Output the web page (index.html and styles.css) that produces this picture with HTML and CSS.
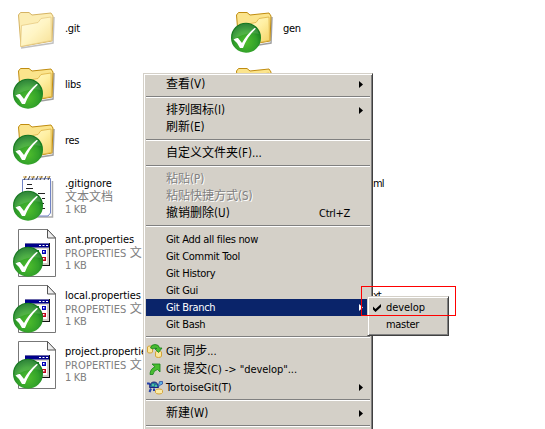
FILE: index.html
```
<!DOCTYPE html>
<html lang="zh-CN">
<head>
<meta charset="utf-8">
<title>Git</title>
<link rel="stylesheet" href="styles.css">
</head>
<body>
<svg class="defs" width="0" height="0">
  <defs>
    <linearGradient id="front" x1="0" y1="0" x2="1" y2="1"><stop offset="0" stop-color="#fffbd8"/><stop offset=".5" stop-color="#fff0a4"/><stop offset="1" stop-color="#f3cf5c"/></linearGradient>
    <radialGradient id="green" cx=".5" cy=".65" r=".6"><stop offset="0" stop-color="#4fbe2c"/><stop offset=".6" stop-color="#32a12a"/><stop offset="1" stop-color="#12751d"/></radialGradient>
    <symbol id="folder" viewBox="8 0 48 56">
      <path d="M21 48 53 43 54 17" fill="none" stroke="#777" stroke-width="1.500" opacity=".7"/>
      <path d="M18.500 15 20.500 12.500H29L32 15 51 13 53 16 52 41 21 46.500Z" fill="#fbe48c" stroke="#c08c10"/>
      <path d="M21.500 25.500 38 22.500 41 18.500 51 17 51.500 40.500 20.500 46.500Z" fill="url(#front)" stroke="#dcb040" stroke-width=".8"/>
    </symbol>
    <symbol id="note" viewBox="8 0 48 56">
      <path d="M24 49H52.500V13" fill="none" stroke="#aaa" stroke-width="1.500"/>
      <path d="M22.500 11.500 50.500 10.500V45L48 48H22.500Z" fill="#fff" stroke="#7183c5"/>
      <path d="M24 12 26 8M28 12 30 8M32 12 34 8M36 12 38 8M40 12 42 8M44 12 46 8M48 12 50 8" stroke="#3c3c3c"/>
      <path d="M23 9H27M31 9H35M39 9H43M47 9H50" stroke="#d9a33b"/>
      <path d="M27 16.500H32M26 20.500H33M38 25.500H45M36 30.500H41M42 30.500H45M37 35.500H44M36 40.500H45" stroke="#222" stroke-width="1.200"/>
    </symbol>
    <symbol id="props" viewBox="8 0 48 56">
      <path d="M18.500 5.500H47.500L55.500 14V52.500H18.500Z" fill="#fff" stroke="#777"/>
      <path d="M47.500 5.500V14H55.500Z" fill="#eee" stroke="#555"/>
      <path d="M25 19H50V42H25Z" fill="#111"/><path d="M25 19H49V41H25Z" fill="#d4d0c8"/><path d="M27 25H47V39H27Z" fill="#fff"/>
      <path d="M25 19.500H49V23.500H25Z" fill="#00008b"/>
      <path d="M39 21H41V22H39ZM42.500 21H44.500V22H42.500ZM46 21H48V22H46Z" fill="#fff"/>
      <path d="M28 26H32V30H28ZM42 26H46V30H42Z" fill="#0000b8"/><path d="M35 26H39V30H35ZM28 33H32V37H28Z" fill="#168a23"/><path d="M35 33H39V37H35ZM42 33H46V37H42Z" fill="#c00018"/>
      <path d="M43 27H44.500V28.500H43ZM43 34H44.500V35.500H43Z" fill="#fff"/>
    </symbol>
    <symbol id="ok" viewBox="8 0 48 56">
      <circle cx="28" cy="37.700" r="15" fill="url(#green)"/>
      <path d="M14.500 35A13.500 13.500 0 0 1 41 34Q28 31 14.500 40Z" fill="#fff" opacity=".13"/>
      <path d="M15.500 39.500Q18 37.500 20 38L24 43Q29 34 36.500 28L38 28.500Q29 37 25 48H22Q20 43 15.500 39.500Z" fill="#fff"/>
    </symbol>
    <symbol id="arrow" viewBox="0 0 4 7"><path d="M0 0 4 3.500 0 7Z" fill="currentColor"/></symbol>
  </defs>
</svg>

<main class="files">
  <div class="tile"><svg class="icon faded"><use href="#folder"/></svg><div class="info"><span>.git</span></div></div>
  <div class="tile"><svg class="icon"><use href="#folder"/><use href="#ok"/></svg><div class="info"><span>gen</span></div></div>
  <div class="tile"><svg class="icon"><use href="#folder"/><use href="#ok"/></svg><div class="info"><span>libs</span></div></div>
  <div class="tile"><svg class="icon"><use href="#folder"/></svg></div>
  <div class="tile"><svg class="icon"><use href="#folder"/><use href="#ok"/></svg><div class="info"><span>res</span></div></div>
  <div class="tile"></div>
  <div class="tile"><svg class="icon"><use href="#note"/><use href="#ok"/></svg><div class="info"><span class="even">.gitignore</span><span class="meta zh">文本文档</span><span class="meta">1 KB</span></div></div>
  <div class="tile"><div class="info tail"><span class="tight">ml</span><span>&nbsp;</span><span>&nbsp;</span></div></div>
  <div class="tile"><svg class="icon"><use href="#props"/><use href="#ok"/></svg><div class="info"><span class="even">ant.properties</span><span class="meta wide">PROPERTIES <b class="zh">文</b></span><span class="meta">1 KB</span></div></div>
  <div class="tile"></div>
  <div class="tile"><svg class="icon"><use href="#props"/><use href="#ok"/></svg><div class="info"><span class="even">local.properties</span><span class="meta wide">PROPERTIES <b class="zh">文</b></span><span class="meta">1 KB</span></div></div>
  <div class="tile"><div class="info tail"><span class="tight">xt</span><span>&nbsp;</span><span>&nbsp;</span></div></div>
  <div class="tile"><svg class="icon"><use href="#props"/><use href="#ok"/></svg><div class="info"><span class="even">project.properties</span><span class="meta wide">PROPERTIES <b class="zh">文</b></span><span class="meta">1 KB</span></div></div>
</main>

<nav class="menu main-menu">
  <div class="item paren"><span><b class="zh">查看</b>(V)</span><svg class="sub"><use href="#arrow"/></svg></div>
  <hr>
  <div class="item paren"><span><b class="zh">排列图标</b>(I)</span><svg class="sub"><use href="#arrow"/></svg></div>
  <div class="item paren"><span><b class="zh">刷新</b>(E)</span></div>
  <hr>
  <div class="item paren"><span><b class="zh">自定义文件夹</b>(F)...</span></div>
  <hr>
  <div class="item paren disabled"><span><b class="zh">粘贴</b>(P)</span></div>
  <div class="item paren disabled"><span><b class="zh">粘贴快捷方式</b>(S)</span></div>
  <div class="item"><span class="paren"><b class="zh">撤销删除</b>(U)</span><span class="key">Ctrl+Z</span></div>
  <hr>
  <div class="item"><span>Git Add all files now</span></div>
  <div class="item"><span>Git Commit Tool</span></div>
  <div class="item"><span>Git History</span></div>
  <div class="item"><span>Git Gui</span></div>
  <div class="item active"><span>Git Branch</span><svg class="sub"><use href="#arrow"/></svg></div>
  <div class="item"><span>Git Bash</span></div>
  <hr>
  <div class="item tall even">
    <svg class="mini" viewBox="0 0 16 16"><path d="M.5 4Q.5 3 3 3T5.500 4V9Q5.500 10 3 10T.5 9ZM8.500 9Q8.500 8 11.500 8T14.500 9V13Q14.500 14.500 11.500 14.500T8.500 13Z" fill="#fbe79a" stroke="#d3a33a"/><path d="M3.500 5Q4 1.500 8 1.500T12.500 5H15L11.500 9.500 7.500 5.500H10Q8 3.500 6 6Z" fill="#48bd30" stroke="#16801a" stroke-width=".8"/></svg>
    <span>Git <b class="zh">同步</b>...</span></div>
  <div class="item tall even">
    <svg class="mini" viewBox="0 0 16 16"><path d="M5 3H13V11L10.500 8.500Q6.500 9.500 6 13.500H3Q3 8 8 5.800Z" fill="#48bd30" stroke="#16801a" stroke-width=".8"/></svg>
    <span>Git <b class="zh">提交</b>(C) -&gt; "develop"...</span></div>
  <div class="item tall even">
    <svg class="mini" viewBox="0 0 16 16"><path d="M0 4.500H2L4 7M2.500 13 4 9.500M7 9.500V12" stroke="#2742a8" stroke-width="2" fill="none"/><path d="M2.500 8.500Q3 3 7 3T11.500 8.500Z" fill="#25799b" stroke="#20207c"/><path d="M5 5H7V7H5ZM8 6H10V8H8Z" fill="#50bd9b"/><path d="M11 8 12.500 2.500H15.500V5L13.500 6Z" fill="#62b6e6" stroke="#23409e" stroke-width=".7"/><path d="M8.500 11.500Q8.500 10 12 10T15.500 11.500V13.500Q15 15 12 15T8.500 13.500Z" fill="#fbeba6" stroke="#d3a33a"/></svg>
    <span>TortoiseGit(T)</span><svg class="sub"><use href="#arrow"/></svg></div>
  <hr>
  <div class="item paren"><span><b class="zh">新建</b>(W)</span><svg class="sub"><use href="#arrow"/></svg></div>
  <hr class="last">
</nav>

<nav class="menu branch-menu">
  <div class="item even"><svg class="tick" viewBox="0 0 8 8"><path d="M0 2.500 2.500 5 8 0V3L2.500 8 0 5.500Z"/></svg><span>develop</span></div>
  <div class="item"><span>master</span></div>
</nav>
<div class="mark"></div>
</body>
</html>
```
FILE: styles.css
```
* { box-sizing: border-box; }
html, body { margin: 0; height: 100%; overflow: hidden; }
body {
  position: relative;
  background: #fff;
  color: #000;
  font-family: "DejaVu Sans Condensed", "DejaVu Sans", "Noto Sans CJK SC", sans-serif;
  font-stretch: condensed;
  font-size: 11px;
  letter-spacing: -.3px;
  white-space: nowrap;
}
.defs { position: absolute; }
.even { letter-spacing: -.05px; }
.wide { letter-spacing: .1px; }
.tight { letter-spacing: -1px; }
.paren { font-size: 11.5px; letter-spacing: 0; }
.zh {
  font: 400 12px/1 "Noto Sans CJK SC", sans-serif;
  letter-spacing: 0;
}

.files {
  display: grid;
  grid-template-columns: 218px 218px;
  grid-auto-rows: 56px;
}
.tile { display: flex; align-items: center; padding-left: 8px; }
.icon { width: 48px; height: 56px; flex: none; }
.faded { opacity: .65; }
.info { display: flex; flex-direction: column; margin-left: 9px; line-height: 13px; }
.info > span { height: 13px; line-height: 13px; }
.info > .zh { line-height: 11px; }
.meta { color: #808080; }
.tail { margin-left: 147px; }

.menu {
  position: absolute;
  background: #d4d0c8;
  border: 1px solid;
  border-color: #d4d0c8 #404040 #404040 #d4d0c8;
  box-shadow: inset 1px 1px #fff, inset -1px -1px #808080;
  padding: 2px;
}
.main-menu {
  left: 143px;
  top: 73px;
  bottom: 0;
  width: 230px;
  border-bottom: 0;
  box-shadow: inset 1px 1px #fff, inset -1px 0 #808080;
}
.branch-menu { left: 367px; top: 296px; width: 82px; height: 40px; }
.item {
  display: flex;
  align-items: center;
  position: relative;
  height: 17px;
  padding: 0 7px 0 20px;
  line-height: 17px;
}
.tall { height: 18px; }
.main-menu hr {
  height: 2px;
  margin: 3px 0 4px;
  border: 0;
  border-top: 1px solid #808080;
  background: #fff;
}
.main-menu .last { margin-bottom: 0; }
.sub { width: 4px; height: 7px; margin-left: auto; }
.key { margin-left: auto; padding-right: 13px; }
.active { background: #0a246a; color: #fff; }
.disabled { color: #808080; text-shadow: 1px 1px #fff; }
.mini { position: absolute; left: 1px; top: 1px; width: 16px; height: 16px; }
.branch-menu .item { padding-left: 16px; }
.tick { position: absolute; left: 3px; top: 5px; width: 8px; height: 8px; }
.mark {
  position: absolute;
  left: 361px;
  top: 286px;
  width: 95px;
  height: 30px;
  border: 1px solid #f00;
}
```
